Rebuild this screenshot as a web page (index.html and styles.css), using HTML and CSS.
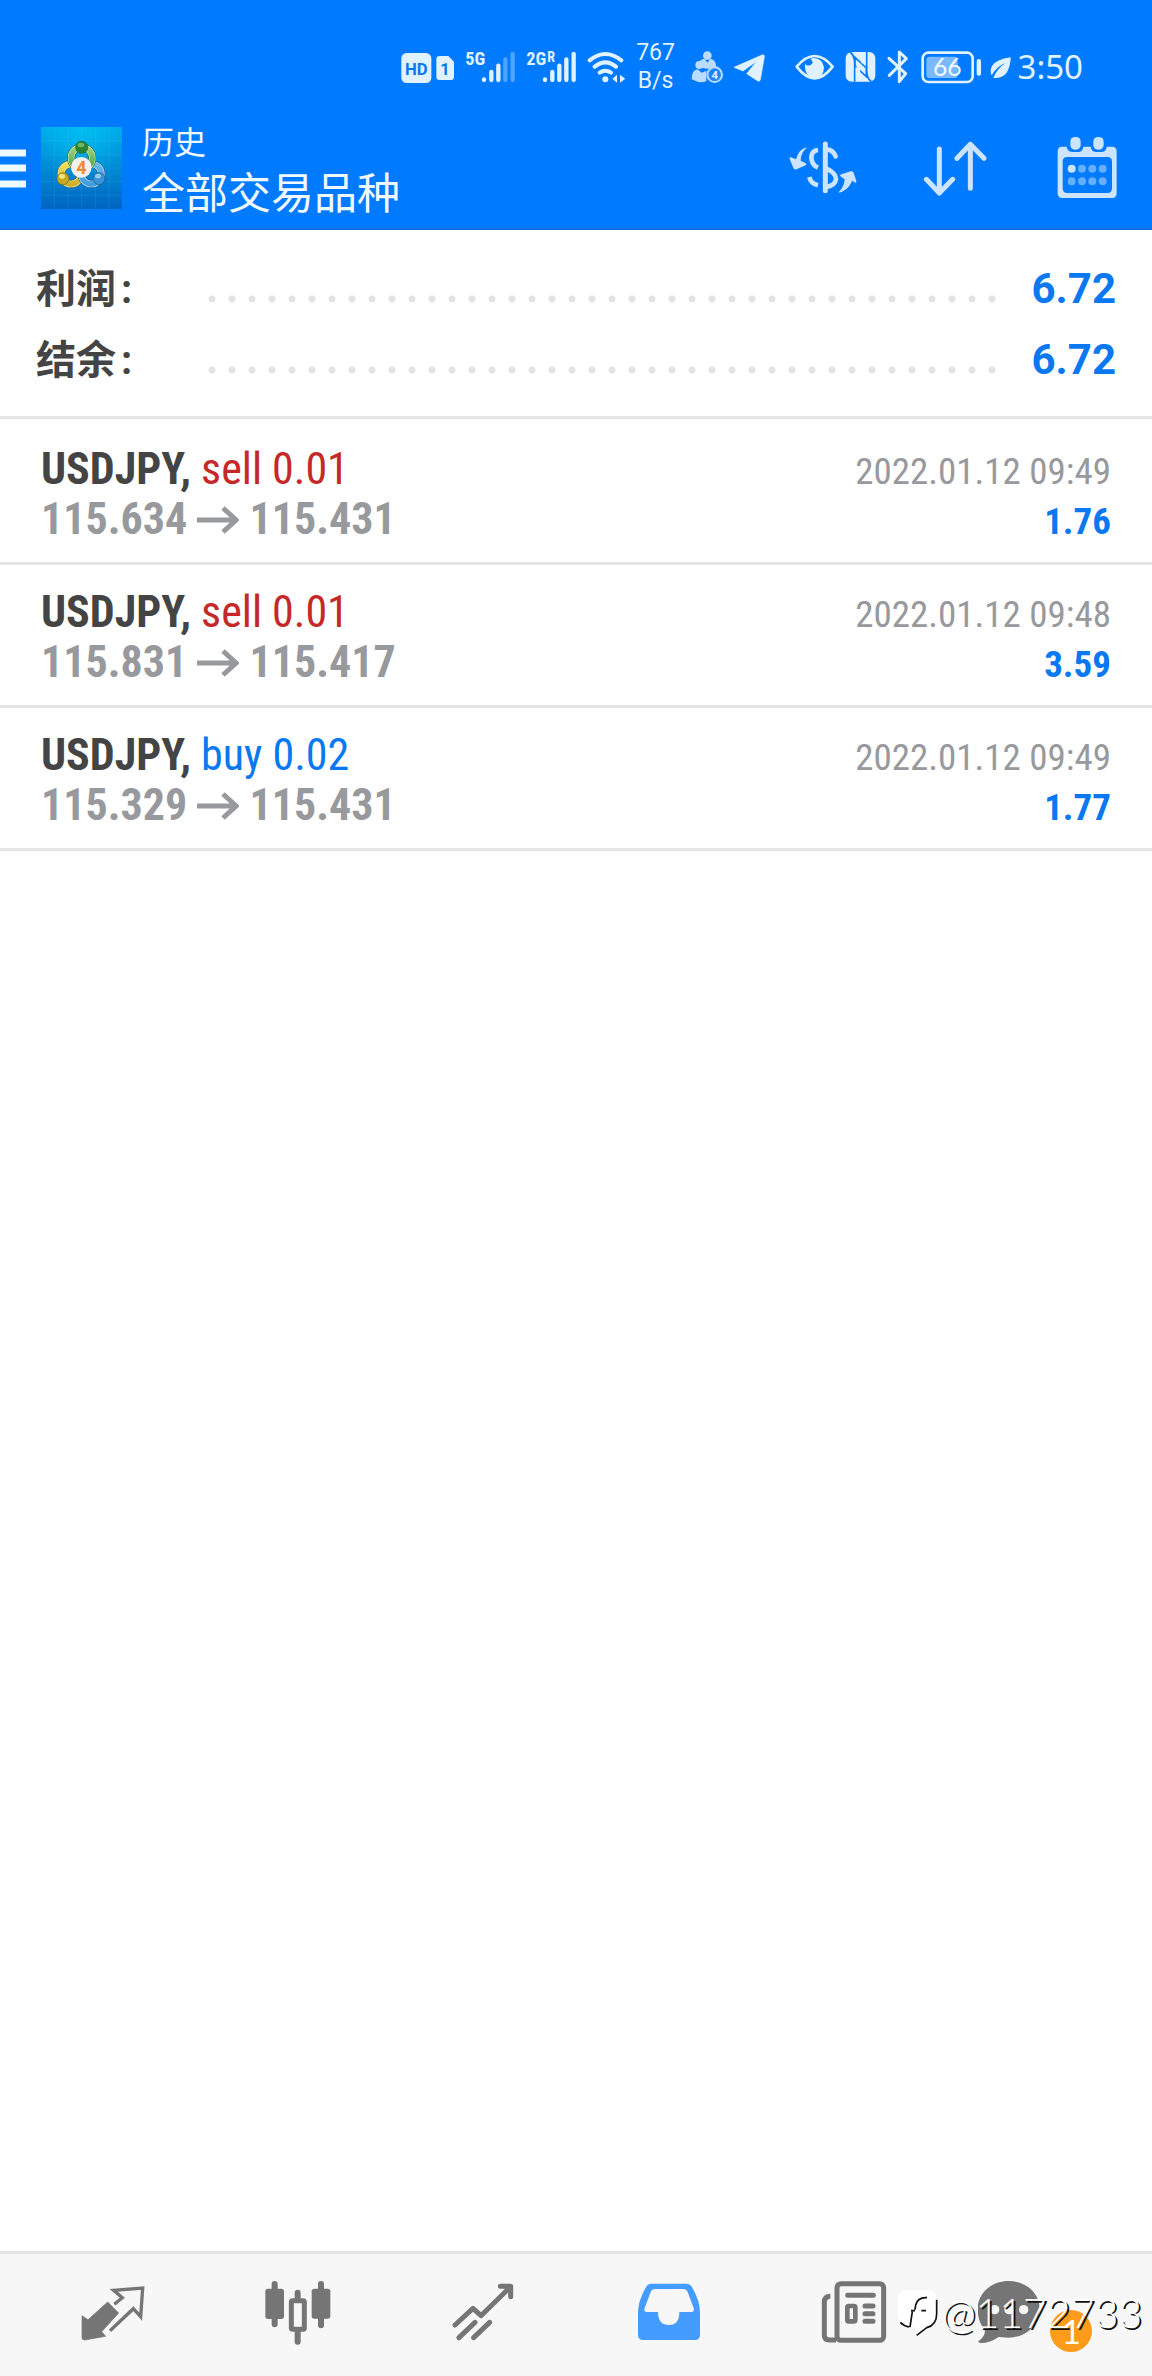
FILE: index.html
```html
<!DOCTYPE html>
<html lang="zh-CN">
<head>
<meta charset="utf-8">
<meta name="viewport" content="width=device-width, initial-scale=1">
<title>历史</title>
<link rel="stylesheet" href="styles.css">
</head>
<body>
<div class="app">
  <div class="top">
    <div class="status">
      <svg width="54" height="36" viewBox="59 57 162 108">
        <rect x="60" y="69" width="90" height="90" rx="16" fill="#e0f2ff"/>
        <text x="105" y="134" class="st-hd" text-anchor="middle">HD</text>
        <path d="M175 78h26l17 17v46q0 9-9 9h-34q-10 0-10-9V88q0-10 10-10z" fill="#e0f2ff"/>
        <text x="191" y="134" class="st-hd" text-anchor="middle">1</text>
      </svg>
      <svg class="g1" width="51" height="36" viewBox="257 57 153 108">
        <text x="258" y="105" class="st-net">5G</text>
        <g stroke="#e0f2ff" stroke-width="13" stroke-linecap="round"><path d="M314 148v2M336 126v24M357 107v43"/><path opacity=".35" d="M378 88v62M400 72v78"/></g>
      </svg>
      <svg class="g1" width="51" height="36" viewBox="440 57 153 108">
        <text x="441" y="105" class="st-net">2G</text><text x="504" y="97" class="st-r">R</text>
        <path d="M497 148v2M519 126v24M540 107v43M561 88v62M583 72v78" stroke="#e0f2ff" stroke-width="13" stroke-linecap="round"/>
      </svg>
      <svg class="g1" width="38" height="36" viewBox="617 57 114 108">
        <g fill="none" stroke="#e0f2ff" stroke-width="12" stroke-linecap="round"><path d="M625 91q47-38 95 0M640 110q32-26 64 0M655 128q17-12 34 0"/></g>
        <circle cx="672" cy="148" r="9" fill="#e0f2ff"/><path d="M707 134v24l-14-12zM716 134v24l16-12z" fill="#e0f2ff"/>
      </svg>
      <span class="speed">767<br>B/s</span>
      <svg class="g3" width="32" height="36" viewBox="932 57 96 108">
        <g fill="#b9dcff"><circle cx="981" cy="77" r="13"/><path d="M952 112q2-24 20-26l9 12 9-12q18 4 18 26l-27 4z"/><circle cx="957" cy="105" r="12"/><path d="M934 148q0-28 18-30l12 10 14-6v32q-18 6-30 0z"/></g>
        <circle cx="1003" cy="134" r="22" fill="#1a86ff" stroke="#b9dcff" stroke-width="6"/>
        <text x="1003" y="146" class="st-four" text-anchor="middle">4</text>
      </svg>
      <svg class="g1" width="32" height="36" viewBox="1059 57 96 108"><path d="M1062 112l84-37q8-3 7 6l-12 68q-2 8-9 3l-32-21 30-37-41 29z" fill="#e0f2ff" stroke="#e0f2ff" stroke-width="2" stroke-linejoin="round"/></svg>
      <svg class="g4" width="40" height="36" viewBox="106 57 120 108"><path d="M111 110q54-64 108 0-54 70-108 0z" fill="none" stroke="#e0f2ff" stroke-width="8" stroke-linejoin="round"/><path d="M152 86q15 14-2 20-8 2-14-4-2 40 30 43 26-2 27-33-4-26-30-28z" fill="#e0f2ff"/></svg>
      <svg class="g1" width="32" height="36" viewBox="255 57 96 108"><rect x="257" y="66" width="89" height="89" rx="18" fill="#e0f2ff"/><path d="M284 155V98q0-20-14-32M320 66v56q0 22 14 33" fill="none" stroke="#007aff" stroke-width="5"/><path d="M285 82l34 32v26l-34-32z" fill="#e0f2ff" stroke="#007aff" stroke-width="5"/><path d="M294 112v42M310 66v34" stroke="#e0f2ff" stroke-width="13"/></svg>
      <svg class="g1" width="22" height="36" viewBox="379 57 66 108"><path d="M385 85l50 46-19 24V66l21 20-51 50" fill="none" stroke="#e0f2ff" stroke-width="9" stroke-linejoin="round" stroke-linecap="round"/></svg>
      <svg class="g2" width="61" height="36" viewBox="481 57 183 108"><rect x="486" y="68" width="150" height="88" rx="17" fill="none" stroke="#e0f2ff" stroke-width="8"/><rect x="497" y="80" width="94" height="64" rx="9" fill="#7ab9ff"/><text x="560" y="139" class="st-bat" text-anchor="middle">66</text><rect x="648" y="87" width="13" height="50" rx="6" fill="#e0f2ff"/></svg>
      <svg class="leaf" width="22" height="36" viewBox="688 57 66 108"><path d="M750 82q-44 6-56 26-8 14-1 28 18-30 42-37-26 16-37 45 26 2 40-16 12-20 12-46z" fill="#e0f2ff"/></svg>
      <time class="clock">3:50</time>
    </div>
    <header class="bar">
      <button class="menu" aria-label="菜单"><svg width="26" height="40" viewBox="0 0 26 40"><path d="M0 5h26M0 20h26M0 36h26" stroke="#eef8ff" stroke-width="7"/></svg></button>
      <svg class="logo" width="81" height="82" viewBox="123 54 243 246">
        <defs>
          <linearGradient id="sky" x2="0" y2="1"><stop offset="0" stop-color="#00a9e6"/><stop offset=".5" stop-color="#008bd4"/><stop offset="1" stop-color="#0064c0"/></linearGradient>
          <radialGradient id="glow" cx=".5" cy="0" r=".6"><stop offset="0" stop-color="#00bdf0"/><stop offset="1" stop-color="#00bdf0" stop-opacity="0"/></radialGradient>
          <linearGradient id="gr" gradientUnits="userSpaceOnUse" x1="0" y1="110" x2="0" y2="190"><stop offset="0" stop-color="#a4d982"/><stop offset="1" stop-color="#3a9c3b"/></linearGradient>
          <linearGradient id="ye" gradientUnits="userSpaceOnUse" x1="0" y1="155" x2="0" y2="235"><stop offset="0" stop-color="#f9e860"/><stop offset="1" stop-color="#c8a925"/></linearGradient>
          <linearGradient id="bl" gradientUnits="userSpaceOnUse" x1="0" y1="155" x2="0" y2="235"><stop offset="0" stop-color="#6fbdee"/><stop offset="1" stop-color="#3b9ade"/></linearGradient>
        </defs>
        <rect x="123" y="54" width="243" height="246" fill="url(#sky)"/><rect x="123" y="54" width="243" height="246" fill="url(#glow)"/>
        <path d="M163 54v246M204 54v246M245 54v246M286 54v246M327 54v246M123 95h243M123 136h243M123 177h243M123 218h243M123 259h243" stroke="#5cc4f2" stroke-opacity=".25" stroke-width="2"/>
        <g fill="none">
          <circle cx="213" cy="195" r="30" stroke="#6f6420" stroke-width="23"/><circle cx="213" cy="195" r="30" stroke="#f3efae" stroke-width="20"/><circle cx="213" cy="195" r="30" stroke="url(#ye)" stroke-width="16"/>
          <circle cx="274" cy="195" r="30" stroke="#154f80" stroke-width="23"/><circle cx="274" cy="195" r="30" stroke="#c5e6fa" stroke-width="20"/><circle cx="274" cy="195" r="30" stroke="url(#bl)" stroke-width="16"/>
          <circle cx="245" cy="147" r="32" stroke="#1d5424" stroke-width="23"/><circle cx="245" cy="147" r="32" stroke="#d5efbf" stroke-width="20"/><circle cx="245" cy="147" r="32" stroke="url(#gr)" stroke-width="16"/>
        </g>
        <circle cx="245" cy="115" r="18" fill="#2c8434" stroke="#1d5f25" stroke-width="2"/><ellipse cx="243" cy="108" rx="10" ry="7" fill="#6db868"/>
        <circle cx="189" cy="209" r="18" fill="#c5a922" stroke="#7c691a" stroke-width="2"/><ellipse cx="186" cy="202" rx="9" ry="7" fill="#f3e683"/>
        <circle cx="297" cy="209" r="18" fill="#3a92d6" stroke="#17568e" stroke-width="2"/><ellipse cx="294" cy="201" rx="9" ry="7" fill="#91cbf0"/>
        <circle cx="244" cy="175" r="31" fill="#f3efec"/><text x="244" y="194" class="logo-four" text-anchor="middle">4</text>
      </svg>
      <div class="titles"><span class="sub">历史</span><h1>全部交易品种</h1></div>
      <div class="actions">
      <button class="action" aria-label="货币"><svg width="68" height="62" viewBox="84 81 204 186">
        <g fill="none" stroke="#cce4ff" stroke-width="14"><path d="M171 120q-18 2-20 20 0 24 20 33M145 201q4 20 26 25"/><path d="M193 102v140" stroke-linecap="round" stroke-width="15"/><path d="M197 118q20 2 27 21" stroke-linecap="round"/><path d="M197 176q28 14 28 31-2 18-28 24"/></g>
        <path d="M139 112q-26 4-34 36l-15-6q-6-1-4 5l11 27q3 6 10 4l27-12q5-3-1-7l-14-7q0-24 20-40zM232 248q27-4 42-36l9 6q4 1 3-5l-8-25q-2-6-9-4l-28 9q-7 3-1 7l11 8q-1 22-19 40z" fill="#cce4ff"/></svg></button>
      <button class="action" aria-label="排序"><svg width="64" height="62" viewBox="486 81 192 186"><path d="M535 117v132M496 208l39 41 40-41M628 235V103M588 145l40-42 41 42" fill="none" stroke="#cce4ff" stroke-width="15" stroke-linecap="round" stroke-linejoin="round"/></svg></button>
      <button class="action" aria-label="日历"><svg width="60" height="62" viewBox="889 81 180 186">
        <path fill-rule="evenodd" d="M904 110h14q2 16 20 16h14q14 0 16-16h22q2 16 18 16h14q14 0 16-16h16q14 0 14 14v126q0 14-14 14H905q-14 0-14-14V124q0-14 13-14zM920 141q-14 0-14 14v80q0 14 14 14h120q14 0 14-14v-80q0-14-14-14z" fill="#cce4ff"/>
        <rect x="929" y="81" width="31" height="38" rx="14" fill="#cce4ff"/><rect x="998" y="81" width="31" height="38" rx="14" fill="#cce4ff"/>
        <circle cx="933" cy="176" r="12" fill="#cce4ff"/><g fill="#66afff"><circle cx="964" cy="176" r="12"/><circle cx="995" cy="176" r="12"/><circle cx="1026" cy="176" r="12"/><circle cx="933" cy="214" r="12"/><circle cx="964" cy="214" r="12"/><circle cx="995" cy="214" r="12"/><circle cx="1026" cy="214" r="12"/></g></svg></button>
      </div>
    </header>
  </div>
  <main class="main">
    <dl class="summary">
      <div class="sum"><dt>利润<span class="colon">:</span></dt><dd><span class="dots"></span>6.72</dd></div>
      <div class="sum"><dt>结余<span class="colon">:</span></dt><dd><span class="dots"></span>6.72</dd></div>
    </dl>
    <ul class="deals">
      <li class="deal">
        <div class="line"><span><b class="symbol">USDJPY,</b> <span class="sell">sell 0.01</span></span><time class="date">2022.01.12 09:49</time></div>
        <div class="line"><span class="prices">115.634 <svg class="arrow" role="img" aria-label="至" viewBox="0 0 42 28"><path d="M0 14h39M26 2l13 12-13 12"/></svg> 115.431</span><span class="profit">1.76</span></div>
      </li>
      <li class="deal">
        <div class="line"><span><b class="symbol">USDJPY,</b> <span class="sell">sell 0.01</span></span><time class="date">2022.01.12 09:48</time></div>
        <div class="line"><span class="prices">115.831 <svg class="arrow" role="img" aria-label="至" viewBox="0 0 42 28"><path d="M0 14h39M26 2l13 12-13 12"/></svg> 115.417</span><span class="profit">3.59</span></div>
      </li>
      <li class="deal">
        <div class="line"><span><b class="symbol">USDJPY,</b> <span class="buy">buy 0.02</span></span><time class="date">2022.01.12 09:49</time></div>
        <div class="line"><span class="prices">115.329 <svg class="arrow" role="img" aria-label="至" viewBox="0 0 42 28"><path d="M0 14h39M26 2l13 12-13 12"/></svg> 115.431</span><span class="profit">1.77</span></div>
      </li>
    </ul>
  </main>
  <nav class="tabs">
    <button class="tab" aria-label="行情"><svg width="64" height="66" viewBox="245 120 192 198"><path d="M325 186l33 33-51 56 12 14-62 11q-9 1-9-7v-66l18 12z" fill="#757575" stroke="#757575" stroke-width="2" stroke-linejoin="round"/><path d="M345 193l24-20-26-22 87-7-6 86-22-24-70 66" fill="none" stroke="#757575" stroke-width="10"/></svg></button>
    <button class="tab" aria-label="图表"><svg width="66" height="66" viewBox="796 120 198 198"><g fill="#757575"><rect x="797" y="146" width="56" height="91" rx="8"/><rect x="936" y="146" width="56" height="90" rx="8"/></g><path d="M825 132v121M964 132v124M894 158v30M894 270v35" stroke="#757575" stroke-width="18" stroke-linecap="round"/><rect x="875" y="182" width="39" height="86" rx="4" fill="#f7f7f7" stroke="#757575" stroke-width="15"/></svg></button>
    <button class="tab" aria-label="交易"><svg width="62" height="66" viewBox="187 120 186 198"><path d="M196 255l54-50 24 22 88-86M332 139h31v31M208 293l48-46M252 293l48-46" fill="none" stroke="#757575" stroke-width="15" stroke-linecap="round" stroke-linejoin="round"/></svg></button>
    <button class="tab" aria-label="历史" aria-current="page"><svg width="62" height="66" viewBox="744 120 186 198"><path fill-rule="evenodd" d="M783 131h106q12 0 18 12 23 40 23 75v66q0 16-16 16H760q-16 0-16-16v-66q0-35 23-75 6-12 16-12zM795 147q-9 0-13 9l-18 48q-4 12 8 12h32q0 39 33 39 31 0 31-39h34q12 0 9-12l-18-48q-4-9-13-9z" fill="#449cff"/></svg></button>
    <button class="tab" aria-label="新闻"><svg width="66" height="66" viewBox="128 120 198 198"><path d="M156 169q-18 0-18 18v98q0 15 15 15h20" fill="none" stroke="#757575" stroke-width="15"/><rect x="176" y="131" width="140" height="170" rx="12" fill="none" stroke="#757575" stroke-width="15"/><path d="M208 166h77M260 198h24M260 221h24M260 244h24" stroke="#757575" stroke-width="15" stroke-linecap="round"/><rect x="207" y="198" width="24" height="46" rx="4" fill="none" stroke="#757575" stroke-width="14"/></svg></button>
    <button class="tab" aria-label="消息"><span class="chat"><svg width="64" height="66" viewBox="594 120 192 198"><path d="M686 123c52 0 93 36 93 84 0 50-44 86-93 86l-30-2q-26 18-54 18-10-1-6-6 22-16 18-34-21-25-21-62c0-48 42-84 93-84z" fill="#757575"/><g fill="#f7f7f7"><circle cx="644" cy="209" r="14"/><circle cx="687" cy="209" r="14"/><circle cx="731" cy="209" r="14"/></g></svg><span class="badge">1</span></span></button>
    <div class="mark"><svg width="41" height="48" viewBox="365 158 123 144"><path d="M393 162h62q26 0 26 28v42q0 36-31 42l-29 22v-24l-32-1q-24-6-24-42v-39q0-28 28-28z" fill="#fff"/><path d="M481 190v42q0 34-30 42l-30 23" fill="none" stroke="#111" stroke-width="5"/><path d="M452 184q-28-2-34 22l-2 14M404 223h12M435 223h14M408 226l-7 46M372 258q12 12 27 14" fill="none" stroke="#111" stroke-width="5"/></svg><span>@1172733</span></div>
  </nav>
</div>
</body>
</html>
```
FILE: styles.css
```css
* { box-sizing: border-box; }
body { margin: 0; background: #fff; font-family: Roboto, "Noto Sans CJK SC", sans-serif; }
button { border: 0; padding: 0; background: none; font: inherit; display: flex; cursor: pointer; }
svg { display: block; flex: none; }

.app { min-height: 100vh; display: flex; flex-direction: column; }

.top { background: #007aff; border-bottom: 2px solid #0a6fe0; }
.status { display: flex; align-items: center; justify-content: flex-end; height: 85px; padding: 49px 69px 0 0; color: #e0f2ff; }
.g1 { margin-left: 10px; }
.g2 { margin-left: 12px; }
.g3 { margin-left: 14px; }
.g4 { margin-left: 30px; }
.leaf { margin-left: 8px; }
.speed { width: 42px; margin-left: 10px; text-align: center; font-size: 23px; line-height: 28px; }
.clock { margin-left: 6px; font-family: "Noto Sans", sans-serif; font-size: 33px; line-height: 36px; }
.st-hd { font: bold 50px Roboto, sans-serif; fill: #0878f0; }
.st-net { font: bold 55px "Roboto Condensed", Roboto, sans-serif; fill: #e0f2ff; }
.st-r { font: bold 42px "Roboto Condensed", Roboto, sans-serif; fill: #e0f2ff; }
.st-four { font: bold 34px Roboto, sans-serif; fill: #e0f2ff; }
.st-bat { font: 74px Lato, sans-serif; fill: #f0f9ff; }

.bar { display: flex; align-items: center; height: 143px; padding: 23px 31px 0 0; color: #eefaff; }
.logo { margin-left: 15px; }
.logo-four { font: bold 54px Roboto, sans-serif; fill: #f08a30; }
.titles { flex: 1; margin-left: 20px; padding-top: 8px; }
.sub { display: block; font-size: 32px; line-height: 44px; }
h1 { margin: 0; font-size: 43px; line-height: 58px; font-weight: 400; }
.actions { display: flex; gap: 64px; }
.action { width: 68px; justify-content: center; }

.main { flex: 1; }
.summary { margin: 0; padding: 23px 36px 21px; border-bottom: 3px solid #e4e4e4; }
.sum { display: flex; align-items: center; height: 71px; }
.sum dt { width: 166px; padding-top: 2px; color: #444; font-size: 40px; line-height: 52px; font-weight: 700; }
.colon { margin-left: 5px; }
.sum dd { flex: 1; display: flex; align-items: center; gap: 35px; margin: 0; color: #0a78f0; font-size: 42px; line-height: 52px; font-weight: 700; }
.dots { flex: 1; height: 8px; margin-top: 20px; background: radial-gradient(circle, #e3e3e3 3px, transparent 4px) 0 0 / 20px 8px repeat-x; }

.deals { margin: 0; padding: 3px 0 0; list-style: none; font-family: "Roboto Condensed", "Liberation Sans Narrow", Roboto, sans-serif; }
.deal { padding: 22px 41px 18px; border-bottom: 3px solid #e4e4e4; font-size: 44px; line-height: 50px; }
.line { display: flex; align-items: baseline; justify-content: space-between; height: 50px; white-space: nowrap; }
.symbol { color: #444; }
.sell { color: #c62828; }
.buy { color: #0a78f0; }
.prices { color: #98999d; font-weight: 700; }
.arrow { display: inline-block; width: 42px; height: 28px; fill: none; stroke: #98999d; stroke-width: 5px; }
.date { color: #98999d; font-size: 37px; line-height: 44px; }
.profit { color: #0a78f0; font-size: 37px; line-height: 44px; font-weight: 700; }

.tabs { position: relative; display: flex; height: 125px; padding: 0 20px; border-top: 3px solid #e4e4e4; background: #f7f7f7; }
.tab { flex: 1; justify-content: center; padding-top: 26px; }
.chat { position: relative; width: 114px; margin-right: 8px; }
.badge { position: absolute; left: 72px; top: 30px; width: 42px; height: 42px; border-radius: 50%; background: #ff9b1a; color: #fff; font: 33px/42px Lato, sans-serif; text-align: center; }
.mark { position: absolute; right: 10px; bottom: 37px; display: flex; align-items: center; gap: 3px; color: #fff; font: 300 41px/52px Lato, sans-serif; text-shadow: 2px 2px 0 #111; pointer-events: none; }
```
